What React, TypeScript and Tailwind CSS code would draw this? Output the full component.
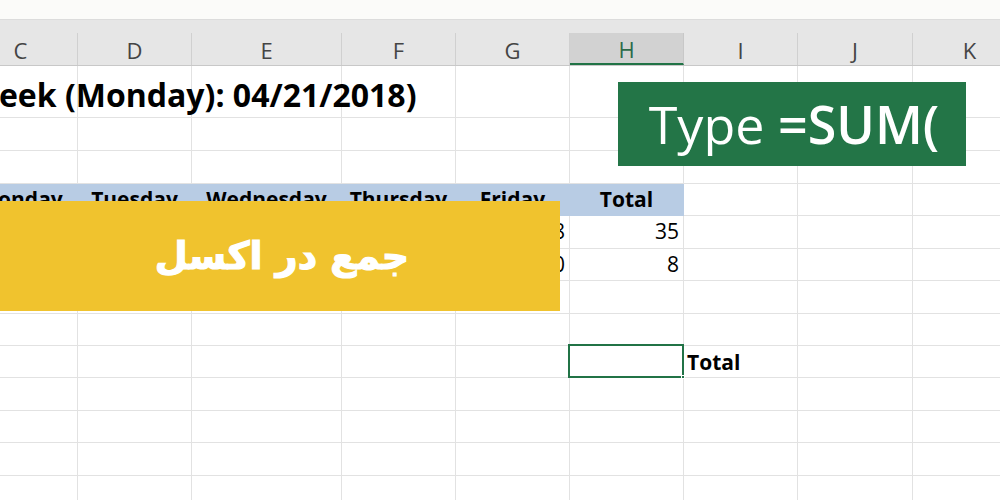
import React from "react";

const cols = [
  { l: "C", w: 114 },
  { l: "D", w: 114 },
  { l: "E", w: 150 },
  { l: "F", w: 114 },
  { l: "G", w: 114 },
  { l: "H", w: 114 },
  { l: "I", w: 114 },
  { l: "J", w: 115 },
  { l: "K", w: 114 },
  { l: "L", w: 114 },
];

const rowH = [52, 33, 33, 32, 33, 32, 33, 32, 32, 33, 32, 33, 32];

type Cell = { text?: string; bold?: boolean; align?: "l" | "c" | "r"; blue?: boolean; sel?: boolean };

function rowCells(r: number): Record<number, Cell> {
  if (r === 3) {
    const names = ["Monday", "Tuesday", "Wednesday", "Thursday", "Friday", "Total"];
    const o: Record<number, Cell> = {};
    names.forEach((n, i) => (o[i] = { text: n, bold: true, align: "c", blue: true }));
    return o;
  }
  if (r === 4) {
    return {
      0: { text: "8", align: "r" },
      1: { text: "5", align: "r" },
      2: { text: "7", align: "r" },
      3: { text: "7", align: "r" },
      4: { text: "8", align: "r" },
      5: { text: "35", align: "r" },
    };
  }
  if (r === 5) {
    return {
      0: { text: "8", align: "r" },
      1: { text: "0", align: "r" },
      2: { text: "0", align: "r" },
      3: { text: "0", align: "r" },
      4: { text: "0", align: "r" },
      5: { text: "8", align: "r" },
    };
  }
  if (r === 8) {
    return { 5: { sel: true }, 6: { text: "Total", bold: true, align: "l" } };
  }
  return {};
}

export default function App() {
  return (
    <div
      className="relative w-[1000px] h-[500px] overflow-hidden bg-white"
      style={{ fontFamily: '"Open Sans", "Liberation Sans", sans-serif' }}
    >
      {/* top strip */}
      <div className="h-[20px] bg-[#fbfbf9] border-b border-[#dcdcdc]" />
      {/* column headers */}
      <div className="h-[46px] bg-[#e6e6e6] border-b border-[#c8c8c8] flex flex-col">
        <div className="h-[13px]" />
        <div className="flex ml-[-36px] h-[33px]">
          {cols.map((c) => (
            <div
              key={c.l}
              style={{ width: c.w }}
              className={
                c.l === "H"
                  ? "shrink-0 flex items-center justify-center pt-[2px] bg-[#d2d2d2] border-r border-[#c8c8c8] border-b-2 border-b-[#217346] text-[#2c6b4a] text-[22px] leading-none"
                  : "shrink-0 flex items-center justify-center pt-[2px] border-r border-[#d0d0d0] text-[#444] text-[22px] leading-none"
              }
            >
              {c.l}
            </div>
          ))}
        </div>
      </div>
      {/* grid rows */}
      {rowH.map((h, r) => {
        const cells = rowCells(r);
        return (
          <div key={r} className="flex ml-[-36px] relative" style={{ height: h }}>
            {cols.map((c, ci) => {
              const cell = cells[ci];
              return (
                <div
                  key={c.l}
                  style={{ width: c.w }}
                  className={
                    "shrink-0 relative flex items-center px-[4px] text-[21px] text-black whitespace-nowrap border-b border-r " +
                    (cell?.blue ? "bg-[#b8cce4] border-[#b8cce4] " : "border-[#e2e2e2] ") +
                    (cell?.bold ? "font-bold " : "") +
                    (cell?.align === "c" ? "justify-center overflow-visible" : cell?.align === "r" ? "justify-end" : "justify-start")
                  }
                >
                  {cell?.text && (
                    <span className={cell.align === "l" ? "relative left-[-1px] top-[1px] z-10" : ""}>{cell.text}</span>
                  )}
                  {cell?.sel && (
                    <div className="absolute left-[-2px] top-[-2px] right-[-1px] bottom-[-1px] border-2 border-[#217346] z-10">
                      <div className="absolute right-[-3px] bottom-[-3px] w-[4px] h-[4px] bg-[#217346] border border-white" />
                    </div>
                  )}
                </div>
              );
            })}
            {r === 0 && (
              <div className="absolute left-[4px] top-[3px] h-full flex items-center text-[32px] font-bold text-black whitespace-nowrap leading-none">
                Week (Monday): 04/21/2018)
              </div>
            )}
          </div>
        );
      })}

      {/* green callout */}
      <div className="absolute left-[618px] top-[82px] w-[348px] h-[84px] bg-[#237547] flex items-center justify-center pl-[4px] text-white text-[52px] leading-none whitespace-nowrap">
        <span className="font-normal">Type&nbsp;</span>
        <span className="font-semibold">=SUM(</span>
      </div>

      {/* yellow banner */}
      <div className="absolute left-0 top-[201px] w-[560px] h-[110px] bg-[#f0c32e] flex items-center justify-center pl-[4px]">
        <span
          dir="rtl"
          className="text-white text-[38px] font-bold leading-none [-webkit-text-stroke:1.2px_white]"
          style={{ fontFamily: '"DejaVu Sans", "Noto Sans", sans-serif' }}
        >
          جمع در اکسل
        </span>
      </div>
    </div>
  );
}
